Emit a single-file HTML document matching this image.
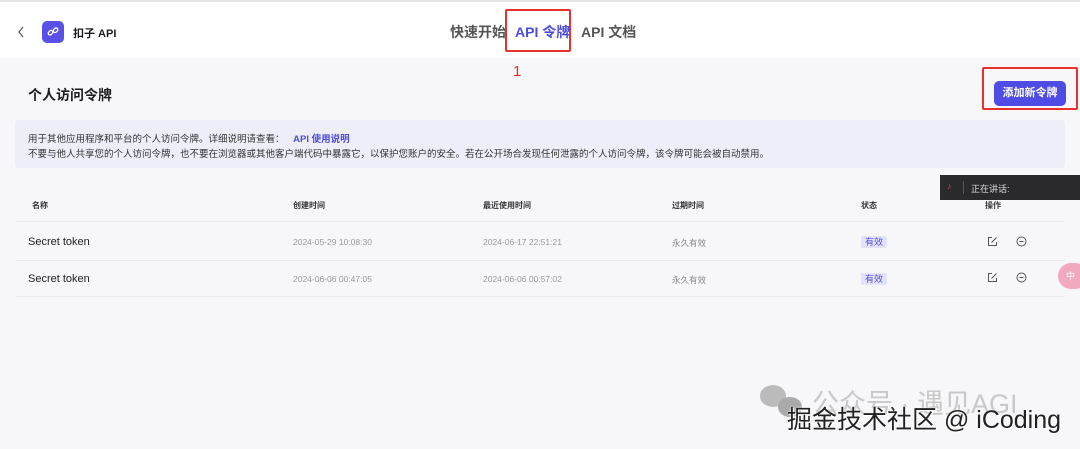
<!DOCTYPE html>
<html><head><meta charset="utf-8"><style>
*{margin:0;padding:0;box-sizing:border-box}
body{width:1080px;height:449px;overflow:hidden;background:#f7f7fa;font-family:"Liberation Sans","Noto Sans CJK SC",sans-serif;position:relative;color:#1d1c23}
.top{position:absolute;left:0;top:0;width:1080px;height:58px;background:#fff;border-top:2px solid #e6e6e6}
.abs{position:absolute;white-space:nowrap}
.red{position:absolute;border:2px solid #e5322d;border-radius:2px}
.row{position:absolute;left:15px;width:1050px;border-bottom:1px solid #ebebef}
.badge{background:#e3e2fb;color:#5550dd;font-size:9px;padding:1px 4px;border-radius:2px}
</style></head><body>
<div class="top">
 <svg class="abs" style="left:17px;top:24px" width="8" height="12" viewBox="0 0 8 12"><path d="M6 1L2 6l4 5" fill="none" stroke="#555" stroke-width="1.2"/></svg>
 <div class="abs" style="left:42px;top:19px;width:22px;height:22px;background:#5a50e6;border-radius:5px"></div>
 <svg class="abs" style="left:46px;top:23px" width="14" height="14" viewBox="0 0 14 14"><g fill="none" stroke="#fff" stroke-width="1.3"><rect x="2" y="6" width="5" height="3.5" rx="1.7" transform="rotate(-45 4.5 7.7)"/><rect x="7" y="3.5" width="5" height="3.5" rx="1.7" transform="rotate(-45 9.5 5.2)"/></g></svg>
 <div class="abs" style="left:73px;top:23px;font-size:11px;font-weight:bold">扣子 API</div>
 <div class="abs" style="left:450px;top:20px;font-size:14px;font-weight:bold;color:#555">快速开始</div>
 <div class="abs" style="left:515px;top:20px;font-size:14px;font-weight:bold;color:#4d4bdc">API 令牌</div>
 <div class="abs" style="left:581px;top:20px;font-size:14px;font-weight:bold;color:#555">API 文档</div>
</div>
<div class="red" style="left:505px;top:9px;width:66px;height:43px"></div>
<div class="abs" style="left:513px;top:63px;font-size:15px;color:#e5322d">1</div>
<div class="abs" style="left:28px;top:85px;font-size:14px;font-weight:bold">个人访问令牌</div>
<div class="red" style="left:982px;top:67px;width:96px;height:43px"></div>
<div class="abs" style="left:994px;top:81px;width:72px;height:25px;background:#4f4ce6;border-radius:5px;color:#fff;font-size:11px;font-weight:bold;text-align:center;line-height:25px">添加新令牌</div>
<div class="abs" style="left:1020px;top:124px;font-size:15px;color:#e5322d">2</div>
<div class="abs" style="left:15px;top:120px;width:1050px;height:48px;background:#eeeef9;border-radius:4px"></div>
<div class="abs" style="left:28px;top:131px;font-size:9.5px;color:#333">用于其他应用程序和平台的个人访问令牌。详细说明请查看： <span style="color:#4d4bdc;font-weight:bold;margin-left:6px">API 使用说明</span></div>
<div class="abs" style="left:28px;top:146px;font-size:9.5px;color:#333">不要与他人共享您的个人访问令牌，也不要在浏览器或其他客户端代码中暴露它，以保护您账户的安全。若在公开场合发现任何泄露的个人访问令牌，该令牌可能会被自动禁用。</div>
<div class="row" style="top:190px;height:32px"></div>
<div class="row" style="top:222px;height:39px"></div>
<div class="row" style="top:261px;height:36px"></div>
<div class="abs" style="left:32px;top:200px;font-size:8px;font-weight:bold;color:#333">名称</div>
<div class="abs" style="left:293px;top:200px;font-size:8px;font-weight:bold;color:#333">创建时间</div>
<div class="abs" style="left:483px;top:200px;font-size:8px;font-weight:bold;color:#333">最近使用时间</div>
<div class="abs" style="left:672px;top:200px;font-size:8px;font-weight:bold;color:#333">过期时间</div>
<div class="abs" style="left:861px;top:200px;font-size:8px;font-weight:bold;color:#333">状态</div>
<div class="abs" style="left:985px;top:200px;font-size:8px;font-weight:bold;color:#333">操作</div>
<div class="abs" style="left:28px;top:236px;font-size:11px">Secret token</div>
<div class="abs" style="left:293px;top:237px;font-size:8.5px;color:#999">2024-05-29 10:08:30</div>
<div class="abs" style="left:483px;top:237px;font-size:8.5px;color:#999">2024-06-17 22:51:21</div>
<div class="abs" style="left:672px;top:237px;font-size:8.5px;color:#888">永久有效</div>
<div class="abs" style="left:861px;top:235px;line-height:12px"><span class="badge">有效</span></div>
<div class="abs" style="left:861px;top:272px;line-height:12px"><span class="badge">有效</span></div>
<div class="abs" style="left:28px;top:273px;font-size:11px">Secret token</div>
<div class="abs" style="left:293px;top:274px;font-size:8.5px;color:#999">2024-06-06 00:47:05</div>
<div class="abs" style="left:483px;top:274px;font-size:8.5px;color:#999">2024-06-06 00:57:02</div>
<div class="abs" style="left:672px;top:274px;font-size:8.5px;color:#888">永久有效</div>
<svg class="abs" style="left:987px;top:236px" width="11" height="11" viewBox="0 0 11 11"><path d="M5 1.5H1.5v8h8V6M4.5 6.5l5-5" fill="none" stroke="#555" stroke-width="1"/></svg>
<svg class="abs" style="left:1016px;top:236px" width="11" height="11" viewBox="0 0 11 11"><circle cx="5.5" cy="5.5" r="4.5" fill="none" stroke="#555"/><path d="M3.5 5.5h4" stroke="#555"/></svg>
<svg class="abs" style="left:987px;top:272px" width="11" height="11" viewBox="0 0 11 11"><path d="M5 1.5H1.5v8h8V6M4.5 6.5l5-5" fill="none" stroke="#555" stroke-width="1"/></svg>
<svg class="abs" style="left:1016px;top:272px" width="11" height="11" viewBox="0 0 11 11"><circle cx="5.5" cy="5.5" r="4.5" fill="none" stroke="#555"/><path d="M3.5 5.5h4" stroke="#555"/></svg>
<div class="abs" style="left:940px;top:175px;width:140px;height:25px;background:#2a2a2c"></div>
<div class="abs" style="left:963px;top:181px;width:1px;height:13px;background:#555"></div>
<div class="abs" style="left:947px;top:181px;font-size:9px;color:#b55">&#9834;</div>
<div class="abs" style="left:971px;top:182px;font-size:9px;color:#ddd">正在讲话:</div>
<div class="abs" style="left:1058px;top:263px;width:30px;height:26px;background:#f2a9c0;border-radius:13px;color:#fff;font-size:9px;line-height:26px;padding-left:8px">中</div>
<div class="abs" style="left:760px;top:385px;width:26px;height:22px;background:#bbb;border-radius:50%"></div>
<div class="abs" style="left:778px;top:397px;width:24px;height:20px;background:#aaa;border-radius:50%"></div>
<div class="abs" style="left:812px;top:382px;font-size:27px;color:#c8c8c8">公众号 · 遇见AGI</div>
<div class="abs" style="left:787px;top:400px;font-size:25px;color:#222;text-shadow:0 0 2px #fff,1px 1px 0 #fff">掘金技术社区 @ iCoding</div>
</body></html>
